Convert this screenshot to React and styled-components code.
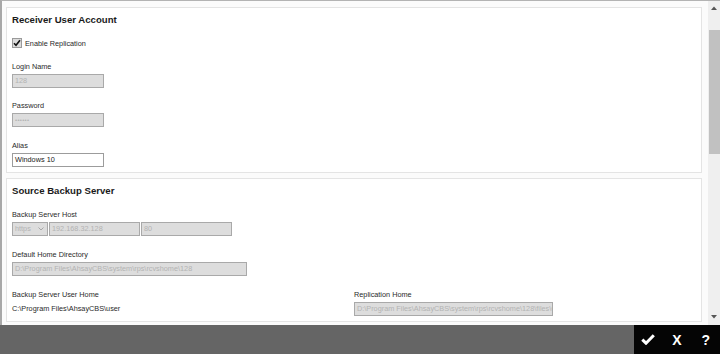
import React from "react";
import styled, { createGlobalStyle } from "styled-components";

const GlobalStyle = createGlobalStyle`
  html, body {
    margin: 0;
    padding: 0;
    background: #fff;
  }
  body {
    font-family: "Liberation Sans", Arial, sans-serif;
  }
`;

const Window = styled.div`
  width: 720px;
  height: 354px;
  display: flex;
  flex-direction: column;
  overflow: hidden;
`;

const Main = styled.div`
  height: 325px;
  box-sizing: border-box;
  display: flex;
  border-top: 1px solid #b3b3b3;
  border-left: 2px solid #a8a8a8;
  background: #fbfbfb;
`;

const Content = styled.div`
  flex: 1;
  padding: 6px 6px 0 4px;
  display: flex;
  flex-direction: column;
  gap: 5px;
  overflow: hidden;
`;

const Card = styled.section`
  flex-shrink: 0;
  background: #fff;
  border: 1px solid #e4e4e4;
  padding: 6px 5px 5px;
`;

const Title = styled.h2`
  margin: 0;
  font-size: 9.6px;
  line-height: 12px;
  font-weight: bold;
  color: #1a1a1a;
`;

const CheckRow = styled.label`
  display: flex;
  align-items: center;
  gap: 3px;
  height: 10px;
  margin-top: 12px;
  font-size: 7.3px;
  color: #2a2a2a;
`;

const Box = styled.span`
  width: 8px;
  height: 8px;
  border: 1px solid #9a9a9a;
  background: #dcdcdc;
  display: flex;
  align-items: center;
  justify-content: center;
`;

const Field = styled.div`
  margin-top: ${(p) => p.$gap || 14}px;
`;

const Label = styled.div`
  font-size: 7.3px;
  line-height: 10px;
  color: #2a2a2a;
  margin-bottom: 2px;
  white-space: nowrap;
`;

const Input = styled.div`
  box-sizing: border-box;
  width: ${(p) => p.$w}px;
  height: 14px;
  border: 1px solid ${(p) => (p.$disabled ? "#a9a9a9" : "#9c9c9c")};
  background: ${(p) => (p.$disabled ? "#dddddd" : "#fff")};
  color: ${(p) => (p.$disabled ? "#b3b3b3" : "#222")};
  font-size: 7.3px;
  line-height: 12px;
  padding: 0 2px;
  white-space: nowrap;
  overflow: hidden;
`;

const Dots = styled.span`
  font-size: 6px;
  letter-spacing: 0.3px;
`;

const HostRow = styled.div`
  display: flex;
  gap: 1px;
`;

const Select = styled(Input)`
  display: flex;
  align-items: center;
  justify-content: space-between;
  padding: 0 3px 0 2px;
`;

const Grid = styled.div`
  display: grid;
  grid-template-columns: 1fr 1fr;
  margin-top: 14px;
`;

const Value = styled.div`
  font-size: 7.3px;
  line-height: 14px;
  color: #2a2a2a;
`;

const Scrollbar = styled.div`
  width: 12px;
  background: #efefef;
  display: flex;
  flex-direction: column;
  align-items: center;
  padding-top: 5px;
`;

const Thumb = styled.div`
  width: 11px;
  height: 124px;
  margin-top: 20px;
  background: #c1c1c1;
`;

const Spacer = styled.div`
  flex: 1;
`;

const Footer = styled.footer`
  flex: 1;
  display: flex;
  justify-content: flex-end;
  background: #656565;
`;

const Actions = styled.div`
  width: 86px;
  background: #050505;
  display: flex;
`;

const Action = styled.button`
  flex: 1;
  border: 0;
  padding: 0;
  background: transparent;
  color: #fff;
  font-family: "Liberation Sans", Arial, sans-serif;
  font-weight: bold;
  font-size: 14px;
  display: flex;
  align-items: center;
  justify-content: center;
  cursor: pointer;
`;

const Arrow = ({ up }) => (
  <svg width="6" height="4" viewBox="0 0 6 4">
    <path d={up ? "M0 4 L3 0.5 L6 4 Z" : "M0 0 L3 3.5 L6 0 Z"} fill="#555" />
  </svg>
);

export default function App() {
  return (
    <Window>
      <GlobalStyle />
      <Main>
        <Content>
          <Card>
            <Title>Receiver User Account</Title>
            <CheckRow>
              <Box>
                <svg width="8" height="8" viewBox="0 0 8 8">
                  <path
                    d="M1 4.2 L3 6.3 L7 1.2"
                    fill="none"
                    stroke="#111"
                    strokeWidth="1.6"
                  />
                </svg>
              </Box>
              Enable Replication
            </CheckRow>
            <Field $gap={14}>
              <Label>Login Name</Label>
              <Input $w={92} $disabled>128</Input>
            </Field>
            <Field $gap={13}>
              <Label>Password</Label>
              <Input $w={92} $disabled>
                <Dots>••••••</Dots>
              </Input>
            </Field>
            <Field $gap={14}>
              <Label>Alias</Label>
              <Input $w={92}>Windows 10</Input>
            </Field>
          </Card>

          <Card>
            <Title>Source Backup Server</Title>
            <Field $gap={13}>
              <Label>Backup Server Host</Label>
              <HostRow>
                <Select $w={36} $disabled>
                  https
                  <svg width="6" height="4" viewBox="0 0 6 4">
                    <path d="M0.5 0.5 L3 3 L5.5 0.5" fill="none" stroke="#a0a0a0" strokeWidth="0.9" />
                  </svg>
                </Select>
                <Input $w={91} $disabled>192.168.32.128</Input>
                <Input $w={91} $disabled>80</Input>
              </HostRow>
            </Field>
            <Field>
              <Label>Default Home Directory</Label>
              <Input $w={235} $disabled>
                D:\Program Files\AhsayCBS\system\rps\rcvshome\128
              </Input>
            </Field>
            <Grid>
              <div>
                <Label>Backup Server User Home</Label>
                <Value>C:\Program Files\AhsayCBS\user</Value>
              </div>
              <div>
                <Label>Replication Home</Label>
                <Input $w={199} $disabled>
                  D:\Program Files\AhsayCBS\system\rps\rcvshome\128\files\C
                </Input>
              </div>
            </Grid>
          </Card>
        </Content>
        <Scrollbar>
          <Arrow up />
          <Thumb />
          <Spacer />
          <Arrow />
          <div style={{ height: 6 }} />
        </Scrollbar>
      </Main>
      <Footer>
        <Actions>
          <Action aria-label="OK">
            <svg width="14" height="11" viewBox="0 0 14 11">
              <path
                d="M1.3 5.6 L5 9.2 L12.8 1.2"
                fill="none"
                stroke="#fff"
                strokeWidth="3"
              />
            </svg>
          </Action>
          <Action aria-label="Cancel">X</Action>
          <Action aria-label="Help">?</Action>
        </Actions>
      </Footer>
    </Window>
  );
}
